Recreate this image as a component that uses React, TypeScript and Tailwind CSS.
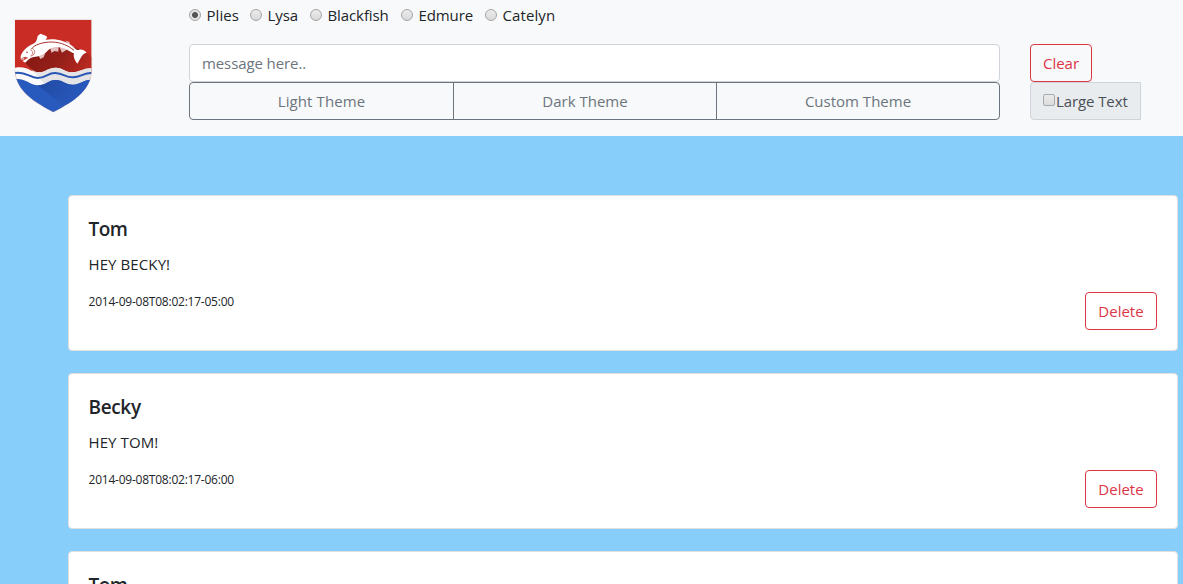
import { useState } from "react";

const people = [
  { name: "Plies", width: "w-[61px]", tracking: "tracking-[0.05px]" },
  { name: "Lysa", width: "w-[60px]", tracking: "tracking-[-0.05px]" },
  { name: "Blackfish", width: "w-[91px]", tracking: "tracking-[-0.1px]" },
  { name: "Edmure", width: "w-[84px]", tracking: "tracking-[-0.1px]" },
  { name: "Catelyn", width: "w-[80px]", tracking: "tracking-[0.1px]" },
];

type Message = { id: number; author: string; text?: string; time?: string };

const messages: Message[] = [
  { id: 1, author: "Tom", text: "HEY BECKY!", time: "2014-09-08T08:02:17-05:00" },
  { id: 2, author: "Becky", text: "HEY TOM!", time: "2014-09-08T08:02:17-06:00" },
  { id: 3, author: "Tom" },
];

function Shield() {
  return (
    <svg className="block h-[136px] w-[110px]" viewBox="0 0 330 408" role="img" aria-label="House crest">
      <defs>
        <clipPath id="crest">
          <path d="M45 59H275V208C275 263 232 300 160 336C88 300 45 263 45 208Z" />
        </clipPath>
        <linearGradient id="redShade" x1="120" y1="150" x2="250" y2="240" gradientUnits="userSpaceOnUse">
          <stop offset="0" stopColor="#8a1a14" />
          <stop offset="0.45" stopColor="#96201a" />
          <stop offset="1" stopColor="#bd2a22" />
        </linearGradient>
        <linearGradient id="blueShade" x1="110" y1="230" x2="210" y2="310" gradientUnits="userSpaceOnUse">
          <stop offset="0" stopColor="#2149a0" />
          <stop offset="1" stopColor="#2757ba" />
        </linearGradient>
      </defs>
      <path d="M43.500 57H276.500V208C276 265 232 302 160 338C88 302 44 265 43.500 208Z" fill="#e9e5e8" />
      <g clipPath="url(#crest)">
        <path d="M45 59H275V340H45Z" fill="#c82c25" />
        <path d="M72 186L110 140L215 138L258 156L275 172V240H130Z" fill="url(#redShade)" />
        <path d="M45 203C82 196 90 216 115 217C137 217 144 203 167 203C190 204 196 218 219 217C241 216 250 204 275 205V340H45Z" fill="#fbfafb" />
        <path d="M94 208C102 213 108 217 115 217C137 217 144 203 167 203C190 204 196 218 219 217C241 216 250 204 275 205V270H150Z" fill="#e4e3e5" />
        <path d="M45 219C77 213 88 233 113 234C138 234 144 218 166 219C191 220 197 233 219 232C243 231 251 218 275 219" fill="none" stroke="#2857b5" strokeWidth="6" />
        <path d="M45 237C79 234 88 255 114 256C138 256 145 240 167 240C190 241 197 255 220 254C242 253 251 238 275 239V340H45Z" fill="#2859bd" />
        <path d="M113 256C138 256 145 240 167 240C190 241 197 255 220 254C242 253 251 238 275 239V262L212 313L188 316Z" fill="url(#blueShade)" />
      </g>
      <g>
        <path d="M113 161L121 177L131 172L137 156ZM150 140L154 158L164 153L175 155L176 138ZM178 140L186 158L199 150L202 145Z" fill="#e3bfbe" />
        <path d="M195 122L208 125L210 136Z" fill="#e3bfbe" />
        <path d="M62 169C67 151 82 139 105 128C110 123 112 115 113 108L121 101L134 106L142 111L137 119C164 114 197 121 220 140C226 147 229 150 236 150C243 147 252 149 260 158C250 160 246 167 242 174L232 191C225 183 219 170 222 160C214 157 211 154 201 149C181 138 155 138 142 153C131 165 115 170 101 171C90 172 84 180 76 188L67 183L75 179L62 178Z" fill="#fff" />
        <path d="M94 148C100 135 128 126 155 126C185 127 205 137 222 151" fill="none" stroke="#a8322f" strokeWidth="3" />
        <path d="M97 145C108 151 105 166 94 168M91 150C102 154 99 164 91 169" fill="none" stroke="#b9403b" strokeWidth="2" />
        <path d="M63 175L76 170L85 173L75 180Z" fill="#c44b46" />
        <path d="M67 178L72 174M73 184L80 176" stroke="#fff" strokeWidth="2" />
        <circle cx="81" cy="157" r="2.500" fill="#b9403b" />
      </g>
    </svg>
  );
}

function MessageCard({ author, text, time }: Omit<Message, "id">) {
  return (
    <article className="h-[156px] shrink-0 rounded border border-[#dfdfdf] bg-white pt-5 pr-5 pl-[19.5px]">
      <h5 className={`h-7 text-[19px] leading-[26px] font-semibold ${author === "Tom" ? "tracking-[-0.6px]" : "tracking-[-0.35px]"}`}>
        {author}
      </h5>
      {text && <p className="mt-2 h-6 text-[15px] leading-6 tracking-[0.1px]">{text}</p>}
      {time && (
        <div className="mt-4 flex items-start justify-between">
          <time className="text-[12px] leading-5 tracking-[-0.23px]">{time}</time>
          <button className="h-[38px] w-[72px] rounded border border-[#dc3545] text-[15px] leading-9 text-[#dc3545]">
            Delete
          </button>
        </div>
      )}
    </article>
  );
}

export default function App() {
  const [selected, setSelected] = useState("Plies");
  const themeButton = "border border-[#6c757d] text-center text-[15px] leading-9 text-[#6c757d]";
  return (
    <div className="flex h-screen flex-col overflow-hidden bg-[#87cefa] font-['Open_Sans','Noto_Sans',sans-serif] text-[#212529]">
      <header className="flex h-[136px] shrink-0 bg-[#f8f9fa]">
        <div className="w-[189px]">
          <Shield />
        </div>
        <div className="w-[811px]">
          <div className="flex h-11">
            {people.map((p) => (
              <label key={p.name} className={`flex h-8 shrink-0 items-start gap-[5.5px] ${p.width}`}>
                <input
                  type="radio"
                  name="person"
                  checked={selected === p.name}
                  onChange={() => setSelected(p.name)}
                  className="mt-[9px] size-[12px] shrink-0 appearance-none rounded-full border border-[#a5a5a5] bg-linear-to-b from-[#ececec] to-[#d9d9d9] checked:bg-[radial-gradient(circle,#555_0,#555_2.6px,#e4e4e4_3.3px)]"
                />
                <span className={`mt-[3px] text-[15px] leading-6 ${p.tracking}`}>{p.name}</span>
              </label>
            ))}
          </div>
          <input
            type="text"
            placeholder="message here.."
            className="block h-[38px] w-full rounded border border-[#ced4da] bg-white px-3 text-[15px] tracking-[-0.1px] text-[#495057] placeholder:text-[#6c757d]"
          />
          <div className="flex h-[38px]">
            <button className={`${themeButton} w-[265px] rounded-l tracking-[0.1px]`}>Light Theme</button>
            <button className={`${themeButton} -ml-px w-[264px]`}>Dark Theme</button>
            <button className={`${themeButton} -ml-px w-[284px] rounded-r`}>Custom Theme</button>
          </div>
        </div>
        <div className="ml-[30px] flex flex-col items-start pt-11">
          <button className="h-[38px] w-[62px] rounded border border-[#dc3545] text-[15px] leading-9 text-[#dc3545]">
            Clear
          </button>
          <label className="flex h-[38px] w-[111px] items-center rounded-l border border-[#ced4da] bg-[#e9ecef] pl-3 text-[15px] text-[#495057]">
            <input
              type="checkbox"
              className="mr-px mb-[3px] size-3 shrink-0 appearance-none rounded-[2px] border border-[#a9a9a9] bg-linear-to-b from-[#ebebeb] to-[#dcdcdc]"
            />
            <span className="tracking-[-0.1px] whitespace-nowrap">Large Text</span>
          </label>
        </div>
      </header>
      <main className="flex flex-col gap-[22px] pt-[59px] pr-[5px] pl-[68px]">
        {messages.map((m) => (
          <MessageCard key={m.id} author={m.author} text={m.text} time={m.time} />
        ))}
      </main>
    </div>
  );
}
